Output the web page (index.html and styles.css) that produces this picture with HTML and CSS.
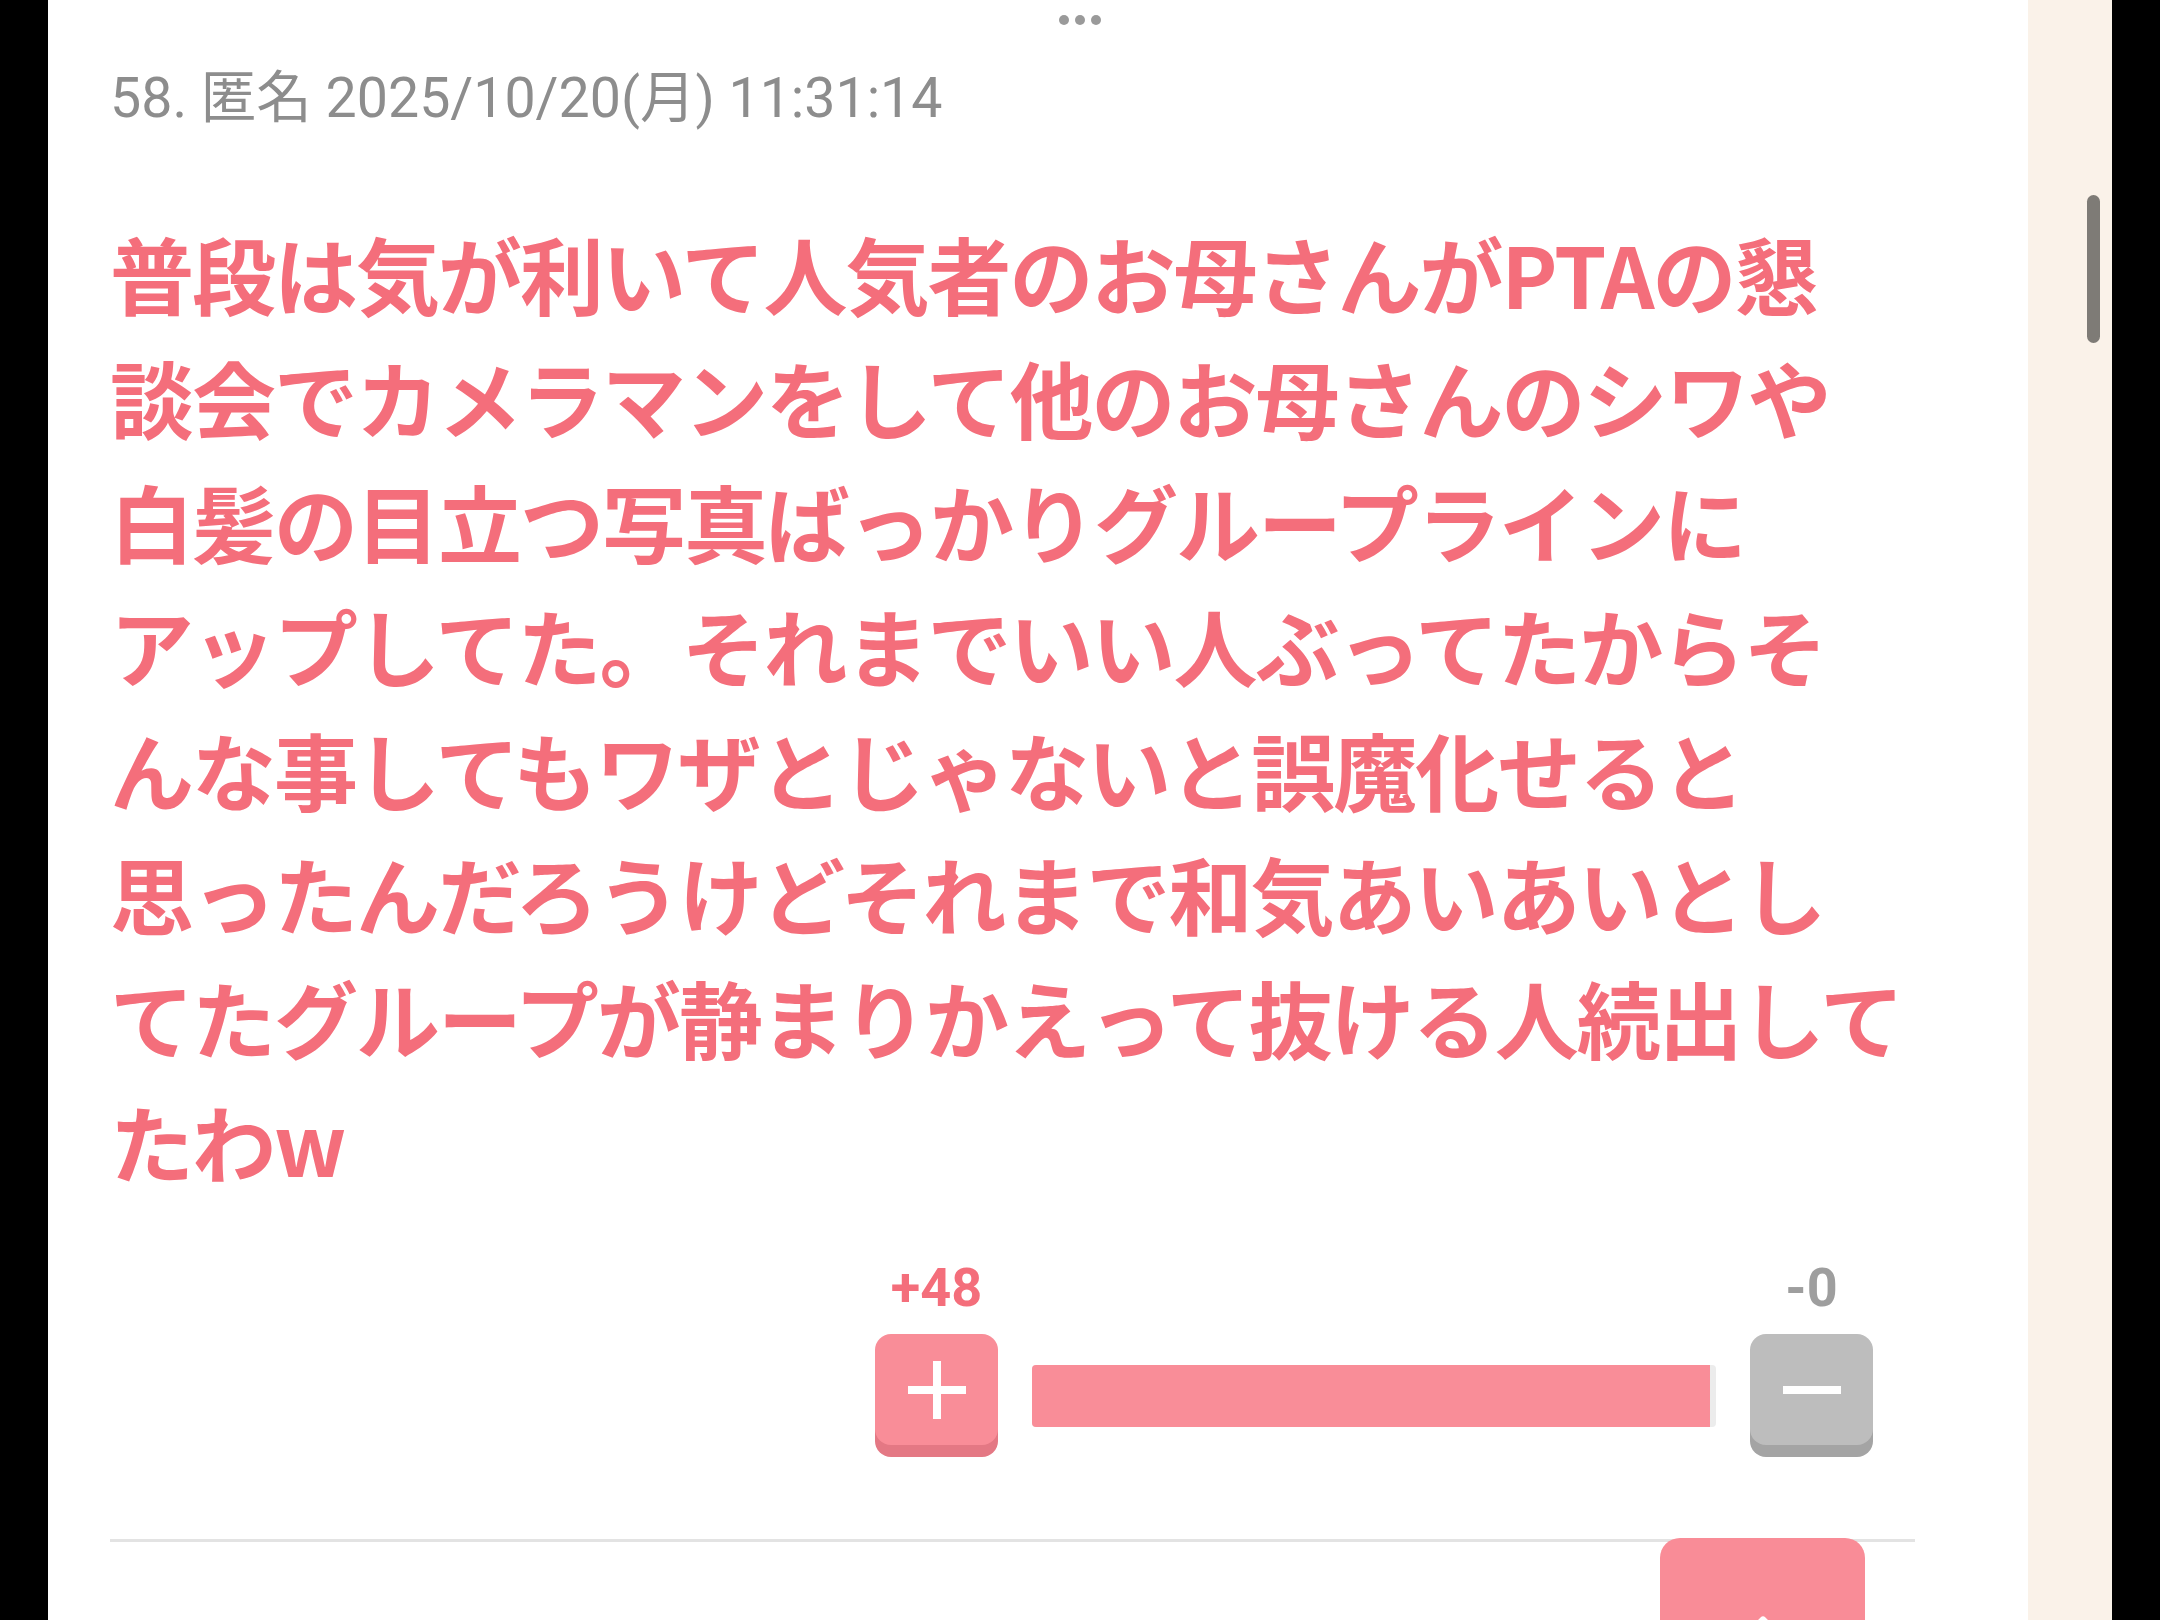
FILE: index.html
```html
<!DOCTYPE html>
<html lang="ja">
<head>
<meta charset="utf-8">
<title>58. 匿名</title>
<link rel="stylesheet" href="styles.css">
</head>
<body>
<div class="screen">
  <div class="bezel"></div>
  <main class="page">
    <article class="comment">
      <header class="meta">58. 匿名 2025/10/20(月) 11:31:14</header>
      <p class="text">普段は気が利いて人気者のお母さんがPTAの懇<br>談会でカメラマンをして他のお母さんのシワや<br>白髪の目立つ写真ばっかりグループラインに<br>アップしてた。それまでいい人ぶってたからそ<br>んな事してもワザとじゃないと誤魔化せると<br>思ったんだろうけどそれまで和気あいあいとし<br>てたグループが静まりかえって抜ける人続出して<br>たわw</p>
      <div class="vote">
        <div class="vote-labels">
          <span class="count count-plus">+48</span>
          <span class="count count-minus">-0</span>
        </div>
        <div class="vote-row">
          <button class="vote-btn vote-plus" aria-label="プラス">
            <svg width="58" height="58" viewBox="0 0 58 58"><rect x="25" y="0" width="8" height="58" fill="#fff"/><rect x="0" y="25" width="58" height="8" fill="#fff"/></svg>
          </button>
          <div class="track"><div class="fill" style="width:99.1%"></div></div>
          <button class="vote-btn vote-minus" aria-label="マイナス">
            <svg width="58" height="58" viewBox="0 0 58 58"><rect x="0" y="25" width="58" height="8" fill="#fff"/></svg>
          </button>
        </div>
      </div>
    </article>
    <div class="footer">
      <button class="top-btn" aria-label="ページトップへ">
        <svg width="60" height="40" viewBox="0 0 60 40"><path d="M8 34 L30 12 L52 34" fill="none" stroke="#fff" stroke-width="7" stroke-linecap="round" stroke-linejoin="round"/></svg>
      </button>
    </div>
  </main>
  <aside class="gutter"><div class="thumb"></div></aside>
  <div class="bezel"></div>
  <div class="handle"><span></span><span></span><span></span></div>
</div>
</body>
</html>
```
FILE: styles.css
```css
html, body {
  margin: 0;
  padding: 0;
  background: #000;
}

.screen {
  position: relative;
  display: flex;
  width: 2160px;
  height: 1620px;
  overflow: hidden;
  font-family: Roboto, "Noto Sans CJK JP", sans-serif;
}

.bezel {
  width: 48px;
  flex: 0 0 48px;
  background: #000;
}

.page {
  flex: 1 1 auto;
  background: #fff;
  padding: 65px 113px 0 62px;
  display: flex;
  flex-direction: column;
}

.gutter {
  flex: 0 0 84px;
  background: #faf2e9;
  padding: 195px 0 0 59px;
  box-sizing: border-box;
}

.thumb {
  width: 13px;
  height: 148px;
  border-radius: 7px;
  background: #7e7b76;
}

.handle {
  position: absolute;
  top: 15px;
  left: 1059px;
  display: flex;
  gap: 6px;
}

.handle span {
  width: 10px;
  height: 10px;
  border-radius: 50%;
  background: #9a9a9a;
}

.meta {
  font-family: Roboto, "Noto Sans CJK JP", sans-serif;
  font-size: 55.5px;
  line-height: 67px;
  color: #8d8d8d;
  white-space: nowrap;
}

.text {
  margin: 79px 0 0 0;
  font-family: "Noto Sans CJK JP", sans-serif;
  font-weight: 700;
  font-size: 84px;
  letter-spacing: -2px;
  line-height: 124px;
  color: #f46e7b;
  white-space: nowrap;
}

.vote {
  width: 998px;
  margin: 53px 42px 0 auto;
}

.vote-labels {
  display: flex;
  justify-content: space-between;
  height: 64px;
  margin-bottom: 14px;
}

.count {
  font-family: Roboto, sans-serif;
  font-weight: 700;
  font-size: 54px;
  line-height: 64px;
  width: 123px;
  text-align: center;
}

.count-plus { color: #f46e7b; }
.count-minus { color: #9e9e9e; }

.vote-row {
  display: flex;
  align-items: flex-start;
  gap: 34px;
}

.vote-btn {
  flex: 0 0 123px;
  width: 123px;
  height: 111px;
  border: 0;
  padding: 0;
  border-radius: 16px;
  display: flex;
  align-items: center;
  justify-content: center;
}

.vote-plus {
  background: #f98d98;
  box-shadow: 0 12px 0 #e47884;
}

.vote-minus {
  background: #bdbdbd;
  box-shadow: 0 12px 0 #a4a4a4;
}

.track {
  flex: 1 1 auto;
  height: 62px;
  margin-top: 31px;
  background: #ececec;
  border-radius: 4px;
  overflow: hidden;
}

.fill {
  height: 100%;
  background: #f98d98;
}

.footer {
  margin-top: 94px;
  border-top: 3px solid #e3e3e3;
  display: flex;
  justify-content: flex-end;
  padding-right: 50px;
}

.top-btn {
  margin-top: -4px;
  width: 205px;
  height: 160px;
  border: 0;
  border-radius: 20px 20px 0 0;
  background: #f98c97;
  padding: 70px 0 0 0;
  display: flex;
  justify-content: center;
  align-items: flex-start;
}
```
